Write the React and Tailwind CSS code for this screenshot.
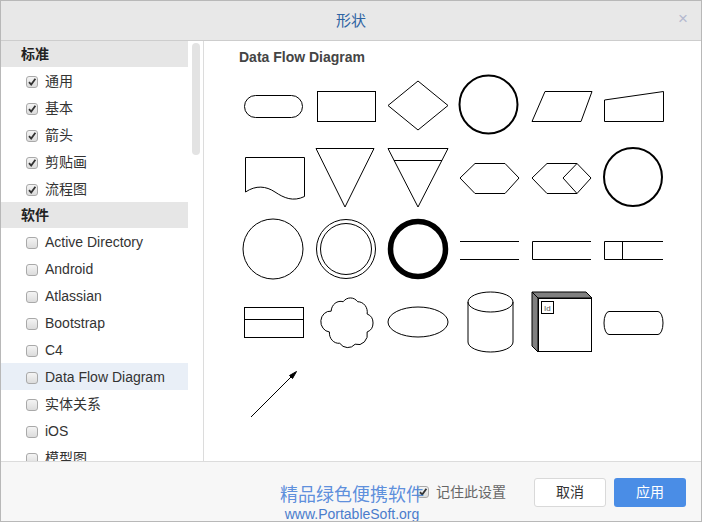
import React from "react";

const FONT = { fontFamily: '"Liberation Sans", "Noto Sans CJK SC", sans-serif' };

function Check({ checked }) {
  return (
    <span className="w-[12px] h-[12px] rounded-[3px] border border-[#a9a9a9] bg-gradient-to-b from-[#f4f4f4] to-[#dcdcdc] flex items-center justify-center shrink-0">
      {checked && (
        <svg width="10" height="10" viewBox="0 0 10 10">
          <path d="M2 5.2 L4.2 7.6 L8.4 1.8" fill="none" stroke="#333" strokeWidth="1.8" />
        </svg>
      )}
    </span>
  );
}

const standard = ["通用", "基本", "箭头", "剪贴画", "流程图"];
const software = [
  "Active Directory",
  "Android",
  "Atlassian",
  "Bootstrap",
  "C4",
  "Data Flow Diagram",
  "实体关系",
  "iOS",
  "模型图",
];

function Section({ title }) {
  return (
    <div className="h-[26px] flex items-center pl-[20px] pt-[1px] bg-[#e6e6e6] text-[14px] font-bold text-[#222]">
      {title}
    </div>
  );
}

function Item({ label, checked, active }) {
  return (
    <div
      className={
        "h-[27px] flex items-center pl-[25px] pt-[2px] gap-[7px] text-[14px] text-[#333] " +
        (active ? "bg-[#e9eff7]" : "")
      }
    >
      <Check checked={checked} />
      <span>{label}</span>
    </div>
  );
}

const S = { fill: "none", stroke: "#000", strokeWidth: 1 };

const shapes = [
  // row 1
  <rect x="6.5" y="25.5" width="58" height="22" rx="11" {...S} />,
  <rect x="7.5" y="21.5" width="58" height="30" {...S} />,
  <polygon points="36,11 66,35.5 36,60 6,35.5" {...S} />,
  <circle cx="34.5" cy="34.5" r="29" {...S} strokeWidth="2" />,
  <polygon points="19,21.5 66,21.5 55,51.5 6,51.5" {...S} />,
  <polygon points="6.5,30 65.5,21.5 65.5,51.5 6.5,51.5" {...S} />,
  // row 2
  <path d="M7.5,15.5 H66.5 V54.5 C55,60 46,56 37,50 C28,44 18,43 7.5,50 Z" {...S} />,
  <polygon points="6,6.5 64,6.5 35,65" {...S} />,
  <g>
    <polygon points="6,6.5 66,6.5 36,65" {...S} />
    <line x1="12" y1="18.5" x2="60" y2="18.5" {...S} />
  </g>,
  <polygon points="6,36 21,21.5 51,21.5 65,36 51,51.5 21,51.5" {...S} />,
  <g>
    <polygon points="6,36 21,21.5 51,21.5 65,36 51,51.5 21,51.5" {...S} />
    <polyline points="51,21.5 37,36 51,51.5" {...S} />
  </g>,
  <circle cx="35" cy="35" r="29" {...S} strokeWidth="2" />,
  // row 3
  <circle cx="35" cy="35" r="30" {...S} />,
  <g>
    <circle cx="36" cy="35" r="29.5" {...S} />
    <circle cx="36" cy="35" r="25.5" {...S} />
  </g>,
  <circle cx="36" cy="35" r="27.5" {...S} strokeWidth="5.5" />,
  <g>
    <line x1="6" y1="27.5" x2="65" y2="27.5" {...S} />
    <line x1="6" y1="45.5" x2="65" y2="45.5" {...S} />
  </g>,
  <path d="M65,27.5 H6.5 V45.5 H65" {...S} />,
  <path d="M65,27.5 H6.5 V45.5 H65 M24.5,27.5 V45.5" {...S} />,
  // row 4
  <g>
    <rect x="6.5" y="21.5" width="59" height="30" {...S} />
    <line x1="6.5" y1="33.5" x2="65.5" y2="33.5" {...S} />
  </g>,
  <g transform="translate(37 36.5) scale(0.857 0.944) translate(-34.5 -36)">
    <path
      d="M16,24 A11,11 0 0,1 30,14 A11,11 0 0,1 47,14 A11,11 0 0,1 58,27 A10,10 0 0,1 58,46 A11,11 0 0,1 44,59 A12,12 0 0,1 26,58 A11,11 0 0,1 14,46 A10,10 0 0,1 16,24 Z"
      {...S}
      vectorEffect="non-scaling-stroke"
    />
  </g>,
  <ellipse cx="36" cy="36" rx="30" ry="15" {...S} />,
  <g>
    <path d="M14,16 A22.5,10 0 0,1 59,16 V56 A22.5,10 0 0,1 14,56 Z" {...S} />
    <path d="M14,16 A22.5,10 0 0,0 59,16" {...S} />
  </g>,
  <g>
    <polygon points="6,6 60,6 66,12 12,12" fill="#808080" stroke="#000" />
    <polygon points="6,6 12,12 12,66 6,60" fill="#808080" stroke="#000" />
    <rect x="12.5" y="12.5" width="53" height="53" {...S} />
    <rect x="15.5" y="15.5" width="12" height="12" {...S} />
    <text x="18" y="24.5" fontSize="8" fill="#555" fontFamily="Liberation Sans, sans-serif">Id</text>
  </g>,
  <path d="M11,25.5 H60 A5,11.5 0 0,1 60,48.5 H11 A5,11.5 0 0,1 11,25.5 Z" {...S} />,
  // row 5
  <g>
    <line x1="13" y1="59" x2="55" y2="17" {...S} />
    <polygon points="58.5,13.5 51.5,17.5 54.5,20.5" fill="#000" stroke="#000" />
  </g>,
];

export default function App() {
  return (
    <div
      className="w-[702px] h-[522px] border border-[#b8b8b8] flex flex-col bg-white relative overflow-hidden"
      style={FONT}
    >
      {/* title bar */}
      <div className="h-[40px] shrink-0 bg-[#e8e8e8] border-b border-[#cdcdcd] flex items-center justify-center relative">
        <span className="text-[15px] text-[#2f64a3] pt-[1px]">形状</span>
        <span className="absolute right-[13px] top-[5px] text-[17px] text-[#b4b9cf]">×</span>
      </div>

      {/* body */}
      <div className="h-[420px] shrink-0 flex">
        <div className="w-[203px] shrink-0 border-r border-[#dcdcdc] flex">
          <div className="w-[187px] h-full overflow-hidden">
            <Section title="标准" />
            {standard.map((s) => (
              <Item key={s} label={s} checked />
            ))}
            <Section title="软件" />
            {software.map((s) => (
              <Item key={s} label={s} active={s === "Data Flow Diagram"} />
            ))}
          </div>
          <div className="flex-1 pl-[4px] pt-[2px]">
            <div className="w-[8px] h-[112px] rounded-full bg-[#e3e3e3]" />
          </div>
        </div>

        <div className="flex-1 pl-[34px] pt-[8px]">
          <div className="ml-[1px] text-[14px] leading-[16px] font-bold text-[#444]">Data Flow Diagram</div>
          <div className="mt-[5px] grid grid-cols-[repeat(6,72px)] auto-rows-[72px]">
            {shapes.map((sh, i) => (
              <svg key={i} width="72" height="72" viewBox="0 0 72 72">
                {sh}
              </svg>
            ))}
          </div>
        </div>
      </div>

      {/* footer */}
      <div className="flex-1 border-t border-[#dcdcdc] bg-[#f7f7f7] flex items-center justify-end pr-[15px] pt-[1px]">
        <div className="flex items-center gap-[7px] mr-[28px]">
          <Check checked />
          <span className="text-[14px] text-[#666]">记住此设置</span>
        </div>
        <button className="w-[72px] h-[29px] rounded-[3px] border border-[#d9d9d9] bg-white text-[14px] text-[#333] mr-[8px]">
          取消
        </button>
        <button className="w-[72px] h-[29px] rounded-[3px] bg-[#4a8de6] text-[14px] text-white">
          应用
        </button>
      </div>

      {/* watermark */}
      <div className="absolute left-[279px] top-[483px] flex flex-col items-center pointer-events-none">
        <span className="text-[18px] leading-[22px] text-[#4a82d9]/90">精品绿色便携软件</span>
        <span className="text-[14px] leading-[16px] text-[#4a7ccc]">www.PortableSoft.org</span>
      </div>
    </div>
  );
}
